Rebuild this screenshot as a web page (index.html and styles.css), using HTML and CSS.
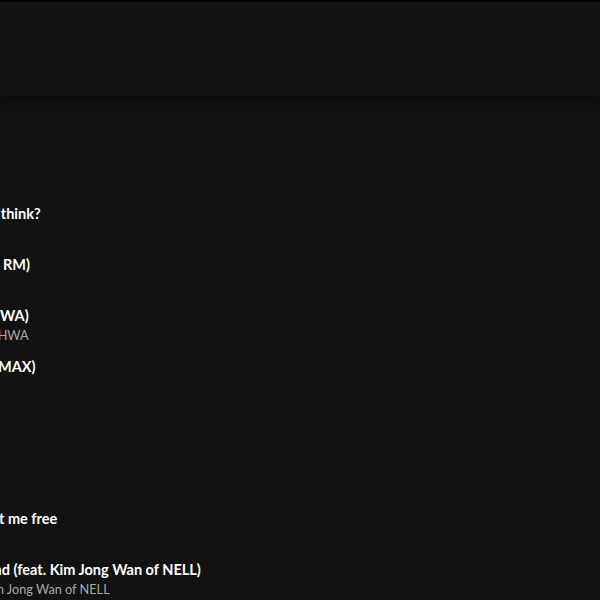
FILE: index.html
```html
<!DOCTYPE html>
<html lang="en">
<head>
<meta charset="utf-8">
<link rel="stylesheet" href="styles.css">
</head>
<body>
<div class="app">
  <div class="topline"></div>
  <header class="header"></header>
  <main class="tracks">
    <div class="row"><span class="num">1</span><div class="info"><div class="title">Moonlight</div><div class="artist">Agust D</div></div></div>
    <div class="row"><span class="num">2</span><div class="info"><div class="title">Daechwita</div><div class="artist">Agust D</div></div></div>
    <div class="row"><span class="num">3</span><div class="info"><div class="title">What do you think?</div><div class="artist">Agust D</div></div></div>
    <div class="row"><span class="num">4</span><div class="info"><div class="title">Strange (feat. RM)</div><div class="artist">Agust D, RM</div></div></div>
    <div class="row"><span class="num">5</span><div class="info"><div class="title">28 (feat. NiiHWA)</div><div class="artist"><span class="explicit">E</span>Agust D, NiiHWA</div></div></div>
    <div class="row"><span class="num">6</span><div class="info"><div class="title">Burn It (feat. MAX)</div><div class="artist">Agust D, MAX</div></div></div>
    <div class="row"><span class="num">7</span><div class="info"><div class="title">People</div><div class="artist">Agust D</div></div></div>
    <div class="row"><span class="num">8</span><div class="info"><div class="title">Honsool</div><div class="artist">Agust D</div></div></div>
    <div class="row"><span class="num">9</span><div class="info"><div class="title">Interlude : Set me free</div><div class="artist">Agust D</div></div></div>
    <div class="row"><span class="num">10</span><div class="info"><div class="title">Dear my friend (feat. Kim Jong Wan of NELL)</div><div class="artist"><span class="explicit">E</span>Agust D, Kim Jong Wan of NELL</div></div></div>
  </main>
</div>
</body>
</html>
```
FILE: styles.css
```css
html, body {
  margin: 0;
  padding: 0;
  background: #121212;
  height: 100%;
  overflow: hidden;
}
.app {
  font-family: Lato, "Noto Sans", sans-serif;
  color: #fff;
}
.topline {
  height: 2px;
  background: #050505;
}
.header {
  height: 94px;
  background: #131313;
  box-shadow: 0 4px 12px rgba(0, 0, 0, 0.45);
  position: relative;
  z-index: 1;
}
.tracks {
  margin-left: -134px;
}
.row {
  display: grid;
  grid-template-columns: 48px 1fr;
  align-items: center;
  height: 50.86px;
}
.num {
  color: #a7a7a7;
  font-size: 14.5px;
  text-align: center;
}
.info {
  display: flex;
  flex-direction: column;
  white-space: nowrap;
}
.title {
  font-size: 14.53px;
  font-weight: 700;
  line-height: 20px;
  color: #fff;
}
.artist {
  display: flex;
  align-items: center;
  font-size: 12.71px;
  line-height: 18px;
  color: #a7a7a7;
}
.explicit {
  display: inline-flex;
  align-items: center;
  justify-content: center;
  width: 14px;
  height: 14px;
  margin-right: 3px;
  border-radius: 2px;
  background: #a7a7a7;
  color: #121212;
  font-size: 9px;
  font-weight: 700;
  line-height: 1;
}
```
